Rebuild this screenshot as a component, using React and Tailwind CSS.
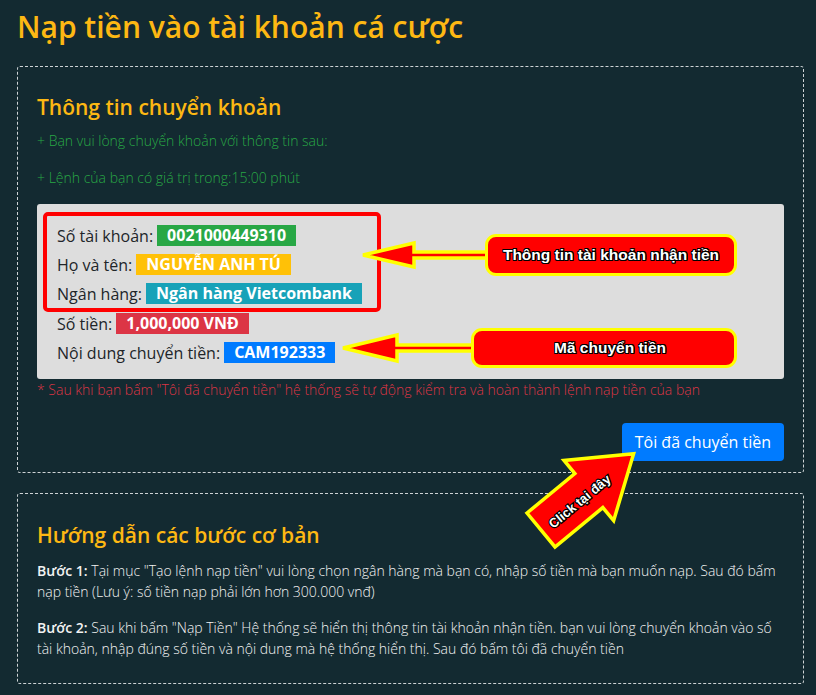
const Row = ({ label, value, color, textColor = 'text-white' }) => (
  <div className="flex h-[29px] items-center gap-[4px]">
    <span>{label}</span>
    <span className={`h-[21px] px-[10px] text-[16px] leading-[21px] font-bold ${color} ${textColor}`}>{value}</span>
  </div>
)

const outline =
  '[text-shadow:-1px_-1px_0_#000,1px_-1px_0_#000,-1px_1px_0_#000,1px_1px_0_#000,0_1px_0_#000,0_-1px_0_#000,1px_0_0_#000,-1px_0_0_#000]'

export default function App() {
  return (
    <div className="relative h-[695px] w-[816px] overflow-hidden bg-[#132a31] pr-[12px] pl-[17px] font-['Open_Sans',sans-serif]">
      <h1 className="pt-[9px] text-[30px] leading-[36px] font-semibold text-[#fdb813]">Nạp tiền vào tài khoản cá cược</h1>

      <div className="mt-[21px] h-[407px] rounded-[3px] border border-dashed border-[#cdd3d5] px-[19px] pt-[26px]">
        <h2 className="text-[21px] leading-[28px] font-semibold text-[#fdb813]">Thông tin chuyển khoản</h2>
        <p className="mt-[9px] text-[14px] leading-[22px] font-light text-[#28a745]">+ Bạn vui lòng chuyển khoản với thông tin sau:</p>
        <p className="mt-[15px] text-[14px] leading-[22px] font-light text-[#28a745]">+ Lệnh của bạn có giá trị trong:15:00 phút</p>

        <div className="relative mt-[15px] h-[175px] rounded-[3px] bg-[#dddddd] pt-[8px] pl-[6px] text-[16px] text-[#212529]">
          <div className="w-[338px] rounded-[5px] border-[4px] border-[#ff0000] pt-[5px] pl-[10px]">
            <Row label="Số tài khoản:" value="0021000449310" color="bg-[#28a745]" />
            <Row label="Họ và tên:" value="NGUYỄN ANH TÚ" color="bg-[#ffc107]" />
            <Row label="Ngân hàng:" value="Ngân hàng Vietcombank" color="bg-[#17a2b8]" />
          </div>
          <div className="-mt-[3px] pl-[14px]">
            <Row label="Số tiền:" value="1,000,000 VNĐ" color="bg-[#dc3545]" />
            <Row label="Nội dung chuyển tiền:" value="CAM192333" color="bg-[#007bff]" />
          </div>

          <svg className="absolute top-0 left-0" width="746" height="175" viewBox="37 204 746 175">
            <polygon
              points="363,255 414,243 414,252 490,252 490,258 414,258 414,267"
              fill="#ff0000"
              stroke="#ffff00"
              strokeWidth="3.5"
              strokeLinejoin="miter"
            />
            <polygon
              points="343,348 397,335 397,345 476,345 476,351 397,351 397,361"
              fill="#ff0000"
              stroke="#ffff00"
              strokeWidth="3.5"
              strokeLinejoin="miter"
            />
          </svg>

          <div
            className={`absolute top-[30px] left-[448px] flex h-[42px] w-[252px] items-center justify-center rounded-[11px] border-[3px] border-[#ffff00] bg-[#ff0000] font-['Liberation_Sans',Arial,sans-serif] text-[15.5px] font-bold text-white ${outline}`}
          >
            Thông tin tài khoản nhận tiền
          </div>
          <div
            className={`absolute top-[124px] left-[434px] flex h-[40px] w-[266px] items-center justify-center rounded-[11px] border-[3px] border-[#ffff00] bg-[#ff0000] pl-[12px] font-['Liberation_Sans',Arial,sans-serif] text-[15.5px] font-bold text-white ${outline}`}
          >
            Mã chuyển tiền
          </div>
        </div>

        <p className="text-[14px] leading-[21px] font-light text-[#dc3545]">
          * Sau khi bạn bấm "Tôi đã chuyển tiền" hệ thống sẽ tự động kiểm tra và hoàn thành lệnh nạp tiền của bạn
        </p>

        <div className="mt-[23px] flex justify-end">
          <button className="h-[38px] rounded-[4px] bg-[#007bff] px-[13px] text-[16px] leading-[24px] text-white">Tôi đã chuyển tiền</button>
        </div>
      </div>

      <div className="mt-[20px] h-[191px] rounded-[3px] border border-dashed border-[#cdd3d5] px-[19px] pt-[27px]">
        <h2 className="text-[21px] leading-[28px] font-semibold text-[#fdb813]">Hướng dẫn các bước cơ bản</h2>
        <p className="mt-[11px] text-[14px] leading-[21px] font-light text-[#f2f2f2]">
          <b className="font-semibold">Bước 1:</b> Tại mục "Tạo lệnh nạp tiền" vui lòng chọn ngân hàng mà bạn có, nhập số tiền mà bạn muốn nạp. Sau đó bấm nạp tiền (Lưu ý: số tiền nạp phải lớn hơn 300.000 vnđ)
        </p>
        <p className="mt-[15px] text-[14px] leading-[21px] font-light text-[#f2f2f2]">
          <b className="font-semibold">Bước 2:</b> Sau khi bấm "Nạp Tiền" Hệ thống sẽ hiển thị thông tin tài khoản nhận tiền. bạn vui lòng chuyển khoản vào số tài khoản, nhập đúng số tiền và nội dung mà hệ thống hiển thị. Sau đó bấm tôi đã chuyển tiền
        </p>
      </div>

      {/* click arrow */}
      <svg className="pointer-events-none absolute top-[435px] left-[515px]" width="135" height="120" viewBox="515 435 135 120">
        <g transform="translate(541 530) rotate(-39.5)">
          <polygon
            points="0,-22 62,-22 62,-39 120,0 62,39 62,22 0,22"
            fill="#ff0000"
            stroke="#ffff00"
            strokeWidth="3.5"
          />
          <text
            x="48"
            y="7"
            textAnchor="middle"
            fontFamily="Liberation Sans, Arial, sans-serif"
            fontWeight="bold"
            fontSize="13"
            fill="#fff"
            stroke="#000"
            strokeWidth="2.5"
            paintOrder="stroke"
          >
            Click tại đây
          </text>
        </g>
      </svg>
    </div>
  )
}
